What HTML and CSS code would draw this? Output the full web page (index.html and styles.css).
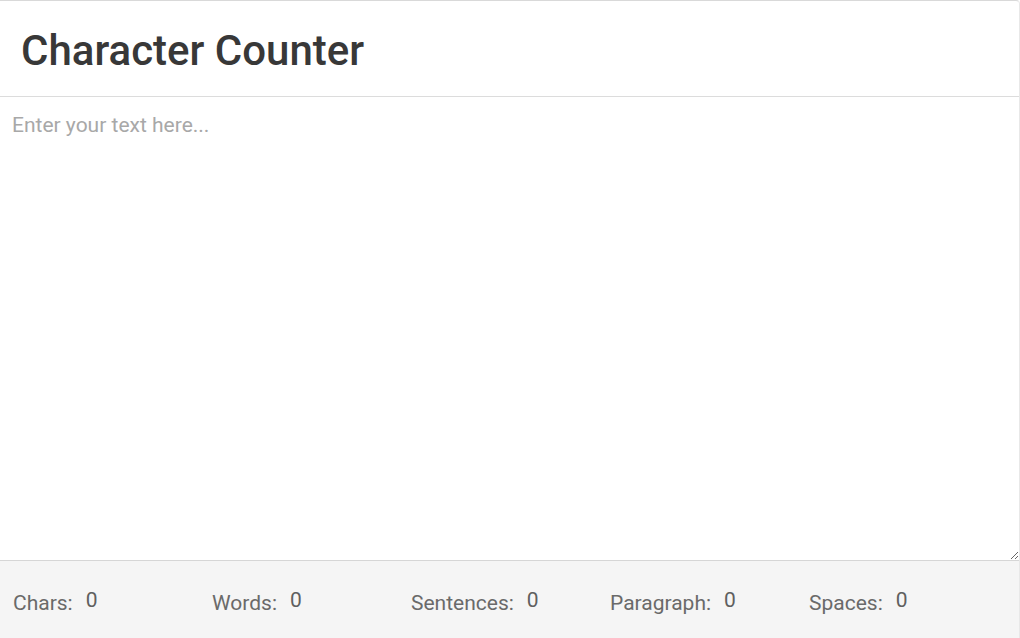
FILE: index.html
```html
<!DOCTYPE html>
<html>
<head>
<meta charset="utf-8">
<title>Character Counter</title>
<link rel="stylesheet" href="styles.css">
</head>
<body>
<div class="card">
  <div class="card-header">
    <h1 class="title">Character Counter</h1>
  </div>
  <textarea class="input" placeholder="Enter your text here..."></textarea>
  <div class="stats">
    <div class="stat"><span class="label">Chars:</span><span class="value">0</span></div>
    <div class="stat"><span class="label">Words:</span><span class="value">0</span></div>
    <div class="stat"><span class="label">Sentences:</span><span class="value">0</span></div>
    <div class="stat"><span class="label">Paragraph:</span><span class="value">0</span></div>
    <div class="stat"><span class="label">Spaces:</span><span class="value">0</span></div>
  </div>
</div>
</body>
</html>
```
FILE: styles.css
```css
html, body {
  margin: 0;
  padding: 0;
  background: #ffffff;
}
body {
  font-family: Roboto, "Liberation Sans", Arial, sans-serif;
  width: 1020px;
  height: 638px;
  overflow: hidden;
}
.card {
  display: flex;
  flex-direction: column;
  height: 638px;
  box-sizing: border-box;
  border-top: 1px solid #d9d9d9;
  border-right: 1px solid #e8e8e8;
  border-top-right-radius: 4px;
}
.card-header {
  height: 96px;
  box-sizing: border-box;
  padding: 25px 0 0 21px;
  border-bottom: 1px solid #dcdcdc;
}
.title {
  margin: 0;
  font-size: 42px;
  font-weight: 500;
  color: #383838;
  line-height: 49px;
}
.input {
  display: block;
  height: 463px;
  width: 100%;
  box-sizing: border-box;
  border: none;
  outline: none;
  margin: 0;
  padding: 16px 12px;
  font-family: Roboto, "Liberation Sans", Arial, sans-serif;
  font-size: 21px;
  color: #333;
  resize: vertical;
}
.input::placeholder {
  color: #a8a8a8;
}
.stats {
  flex: 1;
  display: flex;
  align-items: flex-start;
  background: #f5f5f5;
  border-top: 1px solid #d6d6d6;
  padding: 27px 0 0 13px;
}
.stat {
  width: 199px;
  font-size: 21px;
  line-height: 25px;
  color: #6a6a6a;
}
.value {
  margin-left: 13px;
  color: #5f5f5f;
  vertical-align: 3px;
}
```
